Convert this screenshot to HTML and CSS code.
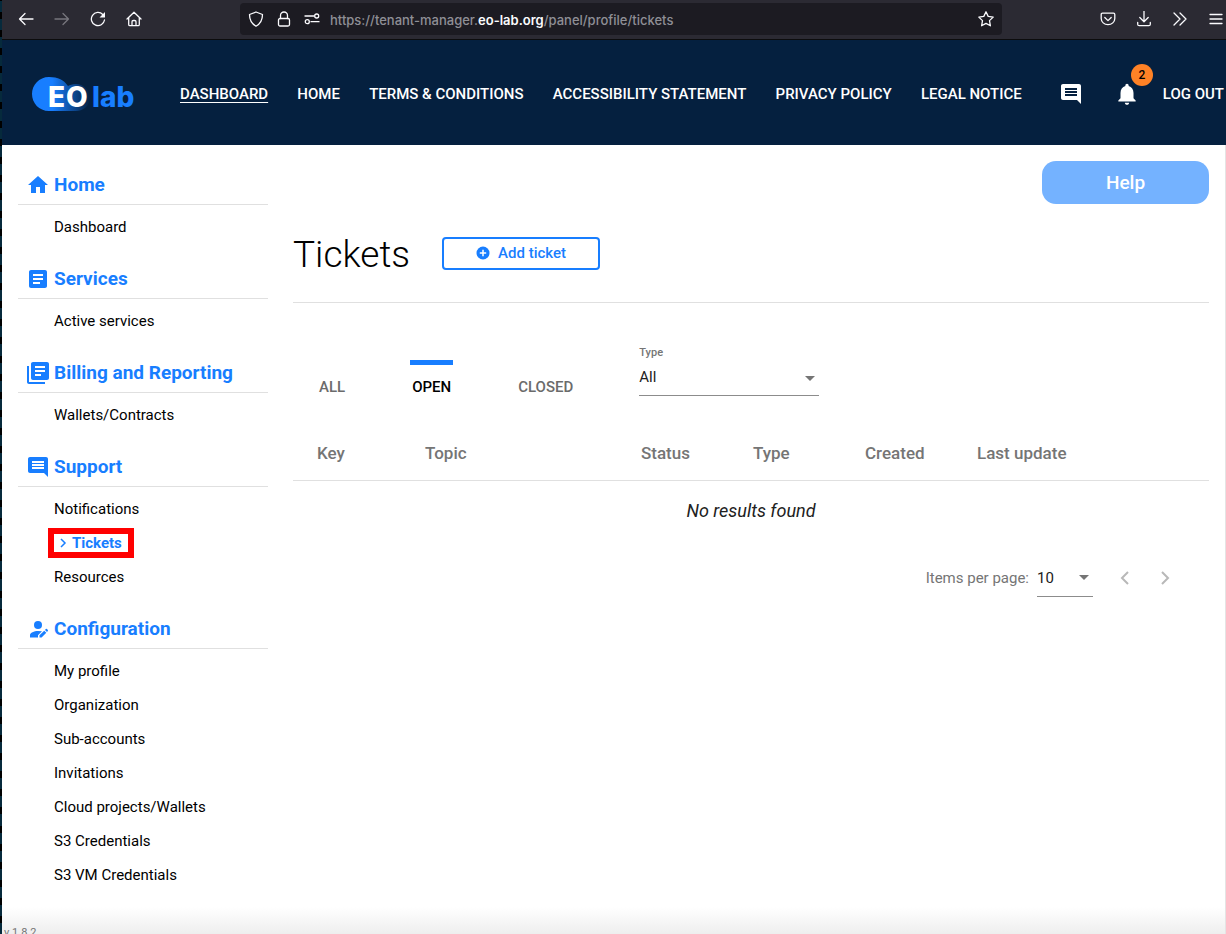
FILE: index.html
```html
<!DOCTYPE html>
<html lang="en">
<head>
<meta charset="utf-8">
<title>Tickets - EO-Lab</title>
<link rel="stylesheet" href="styles.css">
</head>
<body>
<div class="page">
  <div class="toolbar">
    <div class="tools">
      <button class="tool" aria-label="Back"><svg viewBox="0 0 16 16"><path d="M15 8H1.500M7 2.500 1.500 8 7 13.500"/></svg></button>
      <button class="tool tool-off" aria-label="Forward"><svg viewBox="0 0 16 16"><path d="M1 8h13.500M9 2.500 14.500 8 9 13.500"/></svg></button>
      <button class="tool" aria-label="Reload"><svg viewBox="0 0 16 16"><path d="M14.500 9A6.600 6.600 0 1 1 12.800 3.500"/><path class="solid" d="M15 1v5.500H9.500z"/></svg></button>
      <button class="tool" aria-label="Home page"><svg viewBox="0 0 16 16"><path d="M1 8 8 1.200 15 8M2.700 6.800v6.700q0 1.200 1.200 1.200h8.200q1.200 0 1.200-1.200V6.800M6 14.500v-3.700q0-1.300 1.300-1.300h1.400q1.300 0 1.300 1.300v3.700"/></svg></button>
    </div>
    <div class="address">
      <button class="tool tool-small" aria-label="Tracking protection"><svg viewBox="0 0 16 16"><path d="M8 1 14.500 3.500C14.500 9 12 13 8 15.200 4 13 1.500 9 1.500 3.500z"/></svg></button>
      <button class="tool tool-small" aria-label="Connection"><svg viewBox="0 0 16 16"><rect x="2.500" y="7.500" width="11" height="7.500" rx="1.500"/><path d="M4.500 7.500V4.500a3.500 3.500 0 0 1 7 0v3"/></svg></button>
      <button class="tool tool-small" aria-label="Permissions"><svg viewBox="0 0 16 16"><path d="M1 5h9M7 10.700h8"/><circle cx="12.700" cy="5" r="2"/><circle cx="3.300" cy="10.700" r="2"/></svg></button>
      <span class="url">https://tenant-manager.<b>eo-lab.org</b>/panel/profile/tickets</span>
      <button class="tool" aria-label="Bookmark"><svg viewBox="0 0 16 16"><path d="m8 .8 2.200 4.600 5 .7-3.700 3.500.9 5.200L8 12.400l-4.400 2.400.9-5.200L.8 6.100l5-.7z"/></svg></button>
    </div>
    <div class="tools">
      <button class="tool" aria-label="Pocket"><svg viewBox="0 0 16 16"><path d="M1.200 3.500q0-1.300 1.300-1.300h11q1.300 0 1.300 1.300v4a6.800 6.200 0 0 1-13.600 0zM4.800 6.500 8 9.600l3.200-3.100"/></svg></button>
      <button class="tool" aria-label="Downloads"><svg viewBox="0 0 16 16"><path d="M8 0v10.500M3.800 6.500 8 10.700l4.200-4.200M1.700 11.500v1.700q0 1.500 1.500 1.500h9.600q1.500 0 1.500-1.500v-1.700"/></svg></button>
      <button class="tool" aria-label="More tools"><svg viewBox="0 0 16 16"><path d="m2 2 6 6-6 6M8 2l6 6-6 6"/></svg></button>
      <button class="tool tool-last" aria-label="Menu"><svg viewBox="0 0 16 16"><path d="M2 3.500h12M2 8h12M2 12.500h12"/></svg></button>
    </div>
  </div>

  <header class="header">
    <a class="logo" href="#" aria-label="EO Lab">
      <svg viewBox="0 0 108 40">
        <defs>
          <linearGradient id="cloud" x1="0" x2="1"><stop offset=".35" stop-color="#187eff"/><stop offset="1" stop-color="#05203f"/></linearGradient>
        </defs>
        <path fill="url(#cloud)" d="M19 3C9 3 2 11 2 20s7 17 17 17h27c8 0 14-6 14-13S54 10 46 10c-4 0-6 1-8 2C34 6 28 3 19 3z"/>
        <text class="logo-eo" x="18" y="33">E</text>
        <text class="logo-eo" x="36" y="33">O</text>
        <text class="logo-lab" x="62" y="33">lab</text>
      </svg>
    </a>
    <nav class="topnav">
      <a class="current" href="#">DASHBOARD</a>
      <a href="#">HOME</a>
      <a href="#">TERMS &amp; CONDITIONS</a>
      <a href="#">ACCESSIBILITY STATEMENT</a>
      <a href="#">PRIVACY POLICY</a>
      <a href="#">LEGAL NOTICE</a>
    </nav>
    <a class="chat" href="#" aria-label="Messages"><svg class="icon" viewBox="0 0 24 24"><path d="M22 4c0-1.100-.9-2-2-2H4c-1.100 0-2 .9-2 2v12c0 1.100.9 2 2 2h14l4 4zM18 14H6v-2h12zm0-3H6V9h12zm0-3H6V6h12z"/></svg></a>
    <a class="bell" href="#" aria-label="Notifications"><svg viewBox="0 0 24 24"><path d="M12 22c1.100 0 2-.9 2-2h-4c0 1.100.89 2 2 2zm6-6v-5c0-3.070-1.640-5.640-4.500-6.320V4c0-.83-.67-1.500-1.500-1.500s-1.500.67-1.500 1.500v.68C7.630 5.360 6 7.920 6 11v5l-2 2v1h16v-1z"/></svg><span class="badge">2</span></a>
    <a class="logout" href="#">LOG OUT</a>
  </header>

  <div class="content">
    <aside class="sidebar">
      <section class="group">
        <h2><svg class="icon" viewBox="0 0 24 24"><path d="M10 20v-6h4v6h5v-8h3L12 3 2 12h3v8z"/></svg>Home</h2>
        <ul><li><a href="#">Dashboard</a></li></ul>
      </section>
      <section class="group">
        <h2><svg class="icon" viewBox="0 0 24 24"><path d="M19 3H5c-1.100 0-2 .9-2 2v14c0 1.100.9 2 2 2h14c1.100 0 2-.9 2-2V5c0-1.100-.9-2-2-2zm-5 14H7v-2h7zm3-4H7v-2h10zm0-4H7V7h10z"/></svg>Services</h2>
        <ul><li><a href="#">Active services</a></li></ul>
      </section>
      <section class="group">
        <h2><svg class="icon" viewBox="0 0 24 24"><path d="M3 5H1v16c0 1.100.9 2 2 2h16v-2H3zm18-4H7c-1.100 0-2 .9-2 2v14c0 1.100.9 2 2 2h14c1.100 0 2-.9 2-2V3c0-1.100-.9-2-2-2zm-2 10H9V9h10zm-4 4H9v-2h6zm4-8H9V5h10z"/></svg>Billing and Reporting</h2>
        <ul><li><a href="#">Wallets/Contracts</a></li></ul>
      </section>
      <section class="group">
        <h2><svg class="icon" viewBox="0 0 24 24"><path d="M22 4c0-1.100-.9-2-2-2H4c-1.100 0-2 .9-2 2v12c0 1.100.9 2 2 2h14l4 4zM18 14H6v-2h12zm0-3H6V9h12zm0-3H6V6h12z"/></svg>Support</h2>
        <ul>
          <li><a href="#">Notifications</a></li>
          <li><a class="selected" href="#"><svg viewBox="0 0 7 10"><path d="m1 1 4 4-4 4"/></svg>Tickets</a></li>
          <li><a href="#">Resources</a></li>
        </ul>
      </section>
      <section class="group">
        <h2><svg class="icon" viewBox="0 0 24 24"><circle cx="12" cy="8" r="4"/><path d="M12 14c-4 0-8 2-8 4v2.500h8v-2.300l4-3.900Q14 14 12 14zM13.500 20.500v-2.200l4.700-4.600 2.100 2.100-4.700 4.700zM19 12.900l.8-.8q.6-.5 1.200 0l.8.8q.5.600 0 1.200l-.8.900z"/></svg>Configuration</h2>
        <ul>
          <li><a href="#">My profile</a></li>
          <li><a href="#">Organization</a></li>
          <li><a href="#">Sub-accounts</a></li>
          <li><a href="#">Invitations</a></li>
          <li><a href="#">Cloud projects/Wallets</a></li>
          <li><a href="#">S3 Credentials</a></li>
          <li><a href="#">S3 VM Credentials</a></li>
        </ul>
      </section>
    </aside>

    <main class="main">
      <button class="help">Help</button>
      <div class="title-row">
        <h1>Tickets</h1>
        <button class="add"><svg viewBox="0 0 14 14"><circle cx="7" cy="7" r="6.500"/><path d="M7 3.800v6.400M3.800 7h6.400"/></svg>Add ticket</button>
      </div>
      <div class="filters">
        <div class="tabs" role="tablist">
          <button role="tab">ALL</button>
          <button role="tab" aria-selected="true" class="active">OPEN</button>
          <button role="tab">CLOSED</button>
        </div>
        <div class="field">
          <label for="type">Type</label>
          <div class="select"><select id="type"><option>All</option></select></div>
        </div>
      </div>
      <table class="tickets">
        <colgroup><col class="c-key"><col class="c-topic"><col class="c-mid"><col class="c-mid"><col class="c-mid"><col></colgroup>
        <thead><tr><th>Key</th><th>Topic</th><th>Status</th><th>Type</th><th>Created</th><th>Last update</th></tr></thead>
        <tbody><tr><td colspan="6">No results found</td></tr></tbody>
      </table>
      <div class="pager">
        <label for="size">Items per page:</label>
        <div class="select select-size"><select id="size"><option>10</option></select></div>
        <button aria-label="Previous page"><svg viewBox="0 0 10 14"><path d="M8 1 2 7l6 6"/></svg></button>
        <button aria-label="Next page"><svg viewBox="0 0 10 14"><path d="m2 1 6 6-6 6"/></svg></button>
      </div>
    </main>
  </div>
  <footer class="footer">v 1.8.2</footer>
</div>
</body>
</html>
```

FILE: styles.css
```css
* { box-sizing: border-box; }
body {
  margin: 0;
  font: 400 15px/20px Roboto, sans-serif;
  color: #000;
  background: #fff;
  overflow: hidden;
}
button, select { font: inherit; color: inherit; border: 0; background: none; padding: 0; margin: 0; }
button, select { cursor: pointer; }
a { color: inherit; text-decoration: none; }
svg { display: block; flex: none; }
ul { list-style: none; margin: 0; padding: 0; }
h1, h2 { margin: 0; }

.page {
  display: flex;
  flex-direction: column;
  min-height: 100vh;
  border-left: 2px solid;
  border-image: repeating-linear-gradient(#000 0 3px, #062a3c 3px 14px, #000 14px 18px) 2;
}

/* Browser toolbar */
.toolbar {
  display: flex;
  height: 40px;
  padding: 0 0 1px 6px;
  align-items: center;
  background: #2b2a33;
  border-bottom: 1px solid #0c0c0d;
  color: #fbfbfe;
}
.tools { display: flex; }
.tool { width: 36px; height: 32px; display: flex; align-items: center; justify-content: center; }
.tool svg { width: 16px; height: 16px; fill: none; stroke: currentColor; stroke-width: 1.3; stroke-linecap: round; stroke-linejoin: round; }
.tool .solid { fill: currentColor; stroke: none; }
.tool-off { color: #77767e; }
.tool-small { width: 28px; }
.tool-last { width: 28px; padding-left: 10px; justify-content: flex-start; }
.address {
  flex: 1;
  display: flex;
  align-items: center;
  margin: 0 88px;
  padding: 0 0 0 2px;
  background: #1c1b22;
  border-radius: 4px;
}
.address .tool:last-child { width: 32px; }
.url { flex: 1; margin-left: 4px; padding-top: 2px; font: 500 13px/20px Inter, sans-serif; color: #8f8f96; }
.url b { font-weight: 600; color: #fbfbfe; }

/* Site header */
.header {
  display: flex;
  align-items: center;
  height: 105px;
  padding: 2px 2px 0 28px;
  background: #05203f;
  color: #fff;
  font-weight: 500;
}
.logo { margin-right: 42px; }
.logo svg { width: 108px; height: 40px; }
.logo-eo { font: 800 28px Inter, sans-serif; fill: #fff; }
.logo-lab { font: 800 28px Inter, sans-serif; fill: #187eff; }
.topnav { flex: 1; display: flex; justify-content: space-between; }
.current { text-decoration: underline; text-underline-offset: 3px; }
.icon { width: 24px; height: 24px; fill: currentColor; }
.chat { margin: 0 31px 0 37px; }
.bell { position: relative; margin-right: 23px; }
.bell svg { width: 26px; height: 26px; fill: #fff; }
.badge {
  position: absolute;
  left: 17px;
  top: -17px;
  width: 22px;
  height: 22px;
  border-radius: 50%;
  background: #ff8226;
  color: #000;
  font-size: 12px;
  line-height: 22px;
  text-align: center;
}

/* Columns */
.content { flex: 1; display: flex; border-right: 1px solid #e4e4e4; }
.sidebar { width: 250px; flex: none; margin: 20px 25px 0 16px; }
.group { padding-bottom: 15px; }
.group h2 {
  display: flex;
  align-items: center;
  gap: 4px;
  height: 40px;
  padding-left: 8px;
  margin-bottom: 5px;
  border-bottom: 1px solid #e0e0e0;
  color: #187eff;
  font-size: 19px;
  font-weight: 700;
}
.group li { height: 34px; display: flex; align-items: center; padding-left: 36px; }
.selected {
  display: flex;
  align-items: center;
  gap: 5px;
  margin-left: -6px;
  padding: 0 6px;
  border: 6px solid #f00;
  line-height: 18px;
  color: #187eff;
  font-weight: 700;
}
.selected svg { width: 7px; height: 10px; fill: none; stroke: currentColor; stroke-width: 1.5; }

.main { flex: 1; display: flex; flex-direction: column; padding: 16px 16px 0 0; }
.help {
  align-self: flex-end;
  width: 167px;
  height: 43px;
  border-radius: 14px;
  background: #74b2ff;
  color: #fff;
  font-size: 19px;
  font-weight: 500;
}
.title-row {
  display: flex;
  align-items: center;
  gap: 32px;
  height: 99px;
  border-bottom: 1px solid #e0e0e0;
}
.title-row h1 { padding-top: 3px; font-size: 37px; line-height: 48px; font-weight: 300; }
.add {
  display: flex;
  align-items: center;
  justify-content: center;
  gap: 8px;
  width: 158px;
  height: 33px;
  border: 2px solid #187eff;
  border-radius: 4px;
  color: #187eff;
  font-weight: 500;
}
.add svg { width: 14px; height: 14px; fill: #187eff; }
.add path { stroke: #fff; stroke-width: 1.5; }

.filters { display: flex; gap: 64px; padding: 40px 0 0 24px; }
.tabs { display: flex; gap: 63px; margin-top: 17px; align-items: flex-start; }
.tabs button {
  padding: 12px 2px 0;
  border-top: 5px solid transparent;
  color: #6b6b6b;
  font-weight: 500;
}
.tabs .active { border-color: #187eff; color: #000; }
.field { width: 180px; }
.field label { display: block; font-size: 11px; font-weight: 500; color: #757575; }
.select { position: relative; border-bottom: 1px solid #8c8c8c; }
.select::after {
  content: "";
  position: absolute;
  right: 4px;
  top: 50%;
  margin-top: -3px;
  border: 5px solid transparent;
  border-top-color: #757575;
  border-bottom: 0;
  pointer-events: none;
}
.select select { appearance: none; width: 100%; height: 32px; padding-bottom: 4px; color: #212121; }

.tickets { width: 100%; margin-top: 29px; border-collapse: collapse; table-layout: fixed; }
.c-key { width: 108px; }
.c-topic { width: 216px; }
.c-mid { width: 112px; }
.tickets th {
  height: 54px;
  padding: 0 0 0 24px;
  border-bottom: 1px solid #e0e0e0;
  text-align: left;
  font-size: 17px;
  font-weight: 500;
  color: #757575;
}
.tickets td { height: 60px; padding: 2px 0 0; text-align: center; font-size: 18px; font-style: italic; color: #212121; }

.pager { display: flex; align-items: center; justify-content: flex-end; margin-top: 18px; padding-right: 24px; color: #757575; }
.select-size { width: 56px; margin: 0 12px 0 8px; }
.select-size select { height: 37px; padding: 0; }
.pager button { width: 40px; height: 40px; display: flex; align-items: center; justify-content: center; }
.pager button svg { width: 10px; height: 14px; fill: none; stroke: #b8b8b8; stroke-width: 2; }

.footer {
  height: 27px;
  padding: 16px 0 0 2px;
  overflow: hidden;
  background: linear-gradient(#fff, #eee);
  border-right: 1px solid #e4e4e4;
  color: #757575;
  font-size: 11px;
  line-height: 20px;
}
```
